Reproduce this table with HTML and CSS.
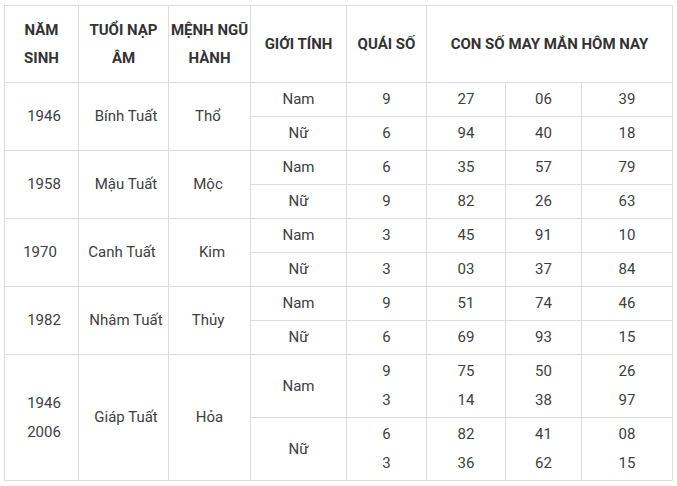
FILE: index.html
```html
<!DOCTYPE html>
<html lang="vi">
<head>
<meta charset="utf-8">
<link rel="stylesheet" href="styles.css">
</head>
<body>
<div class="wrap">
<table class="lucky">
<colgroup>
<col class="c1"><col class="c2"><col class="c3"><col class="c4"><col class="c5"><col class="c6"><col class="c7"><col class="c8">
</colgroup>
<thead>
<tr class="head">
<th>NĂM SINH</th>
<th>TUỔI NẠP ÂM</th>
<th class="tight">MỆNH NGŨ HÀNH</th>
<th>GIỚI TÍNH</th>
<th>QUÁI SỐ</th>
<th colspan="3">CON SỐ MAY MẮN HÔM NAY</th>
</tr>
</thead>
<tbody>
<tr><td rowspan="2" class="rgt">1946</td><td rowspan="2" class="rgt">Bính Tuất</td><td rowspan="2" class="lft">Thổ</td><td>Nam</td><td>9</td><td>27</td><td>06</td><td>39</td></tr>
<tr><td>Nữ</td><td>6</td><td>94</td><td>40</td><td>18</td></tr>
<tr><td rowspan="2" class="rgt">1958</td><td rowspan="2" class="rgt">Mậu Tuất</td><td rowspan="2" class="lft">Mộc</td><td>Nam</td><td>6</td><td>35</td><td>57</td><td>79</td></tr>
<tr><td>Nữ</td><td>9</td><td>82</td><td>26</td><td>63</td></tr>
<tr><td rowspan="2" class="lft">1970</td><td rowspan="2" class="lft">Canh Tuất</td><td rowspan="2" class="rgt">Kim</td><td>Nam</td><td>3</td><td>45</td><td>91</td><td>10</td></tr>
<tr><td>Nữ</td><td>3</td><td>03</td><td>37</td><td>84</td></tr>
<tr><td rowspan="2" class="rgt">1982</td><td rowspan="2" class="rgt">Nhâm Tuất</td><td rowspan="2" class="lft">Thủy</td><td>Nam</td><td>9</td><td>51</td><td>74</td><td>46</td></tr>
<tr><td>Nữ</td><td>6</td><td>69</td><td>93</td><td>15</td></tr>
<tr class="tall"><td rowspan="2" class="rgt">1946<br>2006</td><td rowspan="2" class="rgt">Giáp Tuất</td><td rowspan="2">Hỏa</td><td>Nam</td><td>9<br>3</td><td>75<br>14</td><td>50<br>38</td><td>26<br>97</td></tr>
<tr class="tall"><td>Nữ</td><td>6<br>3</td><td>82<br>36</td><td>41<br>62</td><td>08<br>15</td></tr>
</tbody>
</table>
</div>
</body>
</html>
```
FILE: styles.css
```css
html, body {
  margin: 0;
  padding: 0;
  background: #ffffff;
}
.wrap {
  padding: 5px 4px 0 4px;
}
.lucky {
  border-collapse: collapse;
  table-layout: fixed;
  width: 669px;
  font-family: Roboto, "Liberation Sans", Arial, sans-serif;
  font-size: 15px;
  color: #404040;
}
.c1 { width: 74px; }
.c2 { width: 90px; }
.c3 { width: 82px; }
.c4 { width: 96px; }
.c5 { width: 80px; }
.c6 { width: 79px; }
.c7 { width: 76px; }
.c8 { width: 91px; }
.lucky th,
.lucky td {
  border: 1px solid #dddddd;
  text-align: center;
  vertical-align: middle;
  padding: 0;
  line-height: 29px;
}
.lucky th {
  font-weight: 700;
  color: #333333;
  line-height: 28px;
  padding: 0 6px;
}
.lucky th.tight {
  padding: 0;
}
.lucky td.rgt {
  padding-left: 5px;
}
.lucky td.lft {
  padding-right: 3px;
}
.head th {
  height: 76px;
}
.lucky tbody td {
  height: 33px;
}
.lucky tbody tr.tall td {
  height: 62px;
}
```
